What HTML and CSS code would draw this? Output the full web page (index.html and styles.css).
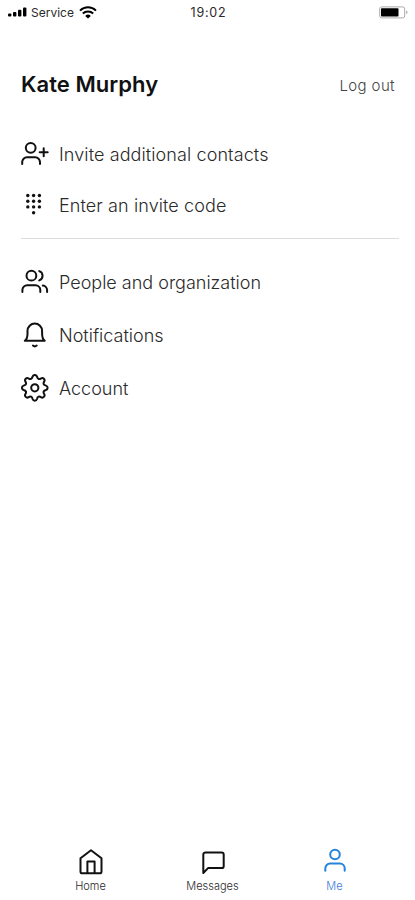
FILE: index.html
```html
<!DOCTYPE html>
<html lang="en">
<head>
  <meta charset="UTF-8" />
  <meta name="viewport" content="width=device-width, initial-scale=1.0"/>
  <title>Me</title>
  <link rel="stylesheet" href="styles.css">
</head>
<body>
  <div class="screen">
    <div class="status-bar">
      <div class="status-left">
        <svg class="signal" width="20" height="10" viewBox="0 0 20 10">
          <rect x="0" y="6.5" width="3.4" height="3" rx="1"/>
          <rect x="5" y="5" width="3.4" height="4.5" rx="1"/>
          <rect x="10" y="2.8" width="3.4" height="6.7" rx="1"/>
          <rect x="15" y="0.5" width="3.4" height="9" rx="1"/>
        </svg>
        <span class="carrier">Service</span>
        <svg class="wifi" width="18" height="13" viewBox="0 0 18 13">
          <path d="M1 4.6a11.5 11.5 0 0 1 16 0M3.8 7.5a7.6 7.6 0 0 1 10.4 0" fill="none" stroke="#000" stroke-width="2"/>
          <path d="M9 12.6L6.2 9.9a4 4 0 0 1 5.6 0z"/>
        </svg>
      </div>
      <span class="time">19:02</span>
      <svg class="battery" width="30" height="13" viewBox="0 0 30 13">
        <rect x="0.7" y="0.9" width="25" height="11" rx="2" fill="none" stroke="#aaa"/>
        <rect x="2" y="2.3" width="17.5" height="8.2" rx="0.8"/>
        <path d="M27.3 4.6c1.6.6 1.6 3 0 3.6z" fill="#999"/>
      </svg>
    </div>

    <div class="header">
      <h1>Kate Murphy</h1>
      <a class="logout">Log out</a>
    </div>

    <div class="menu invites">
      <div class="menu-item">
        <svg class="icon" viewBox="0 0 28 28">
          <circle cx="9.7" cy="7.8" r="4.9"/>
          <path d="M1.2 24v-1.9a4.8 4.8 0 0 1 4.8-4.8h8.2a4.8 4.8 0 0 1 4.8 4.8V24M22.7 8.3v8M18.7 12.3h8"/>
        </svg>
        <span>Invite additional contacts</span>
      </div>
      <div class="menu-item">
        <svg class="icon dots" viewBox="0 0 28 28">
          <circle cx="6.8" cy="4.5" r="1.7"/>
          <circle cx="12.6" cy="4.5" r="1.7"/>
          <circle cx="18.4" cy="4.5" r="1.7"/>
          <circle cx="6.8" cy="10.3" r="1.7"/>
          <circle cx="12.6" cy="10.3" r="1.7"/>
          <circle cx="18.4" cy="10.3" r="1.7"/>
          <circle cx="6.8" cy="15.9" r="1.7"/>
          <circle cx="12.6" cy="15.9" r="1.7"/>
          <circle cx="18.4" cy="15.9" r="1.7"/>
          <circle cx="12.6" cy="21.7" r="1.7"/>
        </svg>
        <span>Enter an invite code</span>
      </div>
    </div>

    <div class="menu settings">
      <div class="menu-item">
        <svg class="icon" viewBox="0 0 28 28">
          <circle cx="10.4" cy="7.7" r="4.9"/>
          <path d="M1.4 24v-2a4.8 4.8 0 0 1 4.8-4.8h8.3a4.8 4.8 0 0 1 4.8 4.8v2M18.2 3.1a4.9 4.9 0 0 1 0 9.3M21.8 17.6a4.8 4.8 0 0 1 4.3 4.8V24"/>
        </svg>
        <span>People and organization</span>
      </div>
      <div class="menu-item">
        <svg class="icon" viewBox="0 0 28 28">
          <path d="M3.8 19.7c2-1.4 2.7-3.4 2.7-7V9.9a7.3 7.3 0 0 1 14.6 0v2.8c0 3.6.7 5.6 2.7 7zM11.9 24.6a3 3 0 0 0 3.8 0"/>
        </svg>
        <span>Notifications</span>
      </div>
      <div class="menu-item">
        <svg class="icon" viewBox="0 0 28 28">
          <g transform="translate(13.8 13.8)">
            <circle r="3.6"/>
            <path d="M11.2-2.2A2.3 2.3 0 0 1 11.2 2.2Q7.4 3.1 9.5 6.4A2.3 2.3 0 0 1 6.4 9.5Q3.1 7.4 2.2 11.2A2.3 2.3 0 0 1-2.2 11.2Q-3.1 7.4-6.4 9.5A2.3 2.3 0 0 1-9.5 6.4Q-7.4 3.1-11.2 2.2A2.3 2.3 0 0 1-11.2-2.2Q-7.4-3.1-9.5-6.4A2.3 2.3 0 0 1-6.4-9.5Q-3.1-7.4-2.2-11.2A2.3 2.3 0 0 1 2.2-11.2Q3.1-7.4 6.4-9.5A2.3 2.3 0 0 1 9.5-6.4Q7.4-3.1 11.2-2.2z"/>
          </g>
        </svg>
        <span>Account</span>
      </div>
    </div>

    <div class="tab-bar">
      <div class="tab">
        <svg class="tab-icon" viewBox="0 0 28 28">
          <path d="M3.5 10.2L14 2.3l10.5 7.9v13.2a1.9 1.9 0 0 1-1.9 1.9H5.4a1.9 1.9 0 0 1-1.9-1.9zM10.4 25.3V13.5h7.2v11.8"/>
        </svg>
        <span>Home</span>
      </div>
      <div class="tab">
        <svg class="tab-icon" viewBox="0 0 28 28">
          <path d="M4.3 25V6.6a2.2 2.2 0 0 1 2.2-2.2h16a2.2 2.2 0 0 1 2.2 2.2v11.3a2.2 2.2 0 0 1-2.2 2.2H9z"/>
        </svg>
        <span>Messages</span>
      </div>
      <div class="tab active">
        <svg class="tab-icon" viewBox="0 0 28 28">
          <circle cx="14" cy="6.5" r="4.8"/>
          <path d="M4.3 22.7v-2.3a4.8 4.8 0 0 1 4.8-4.8h9.8a4.8 4.8 0 0 1 4.8 4.8v2.3"/>
        </svg>
        <span>Me</span>
      </div>
    </div>
  </div>
</body>
</html>
```
FILE: styles.css
```css
body {
  margin: 0;
  font-family: Inter, "Liberation Sans", sans-serif;
  background-color: #fff;
  color: #2a2a2a;
}
.screen {
  display: flex;
  flex-direction: column;
  height: 900px;
  overflow: hidden;
}
.status-bar {
  display: grid;
  grid-template-columns: 1fr auto 1fr;
  align-items: center;
  height: 24px;
  padding: 0 6px 0 8px;
}
.status-left {
  display: flex;
  align-items: center;
}
.carrier {
  font-size: 12px;
  margin: 0 5px 0 3px;
}
.time {
  font-size: 12.5px;
  letter-spacing: 0.8px;
}
.battery {
  justify-self: end;
}
.header {
  display: flex;
  justify-content: space-between;
  align-items: center;
  height: 30px;
  margin: 46px 20px 0 21px;
}
h1 {
  margin: 0;
  padding-bottom: 2px;
  font-size: 22px;
  font-weight: 600;
  line-height: 28px;
  letter-spacing: 0.05px;
  color: #111;
}
.logout {
  font-size: 15px;
  font-weight: 300;
  letter-spacing: 0.4px;
  color: #444;
}
.menu {
  display: flex;
  flex-direction: column;
  margin: 0 16px 0 21px;
}
.invites {
  gap: 23px;
  padding: 40px 0 19px;
  border-bottom: 1px solid #ddd;
}
.settings {
  gap: 25px;
  padding-top: 29px;
}
.menu-item {
  display: flex;
  align-items: center;
  gap: 10px;
  height: 28px;
  font-size: 18px;
  font-weight: 300;
}
.invites .menu-item {
  letter-spacing: 0.1px;
}
.icon,
.tab-icon {
  width: 28px;
  height: 28px;
  fill: none;
  stroke: #111;
  stroke-width: 2;
  stroke-linecap: round;
  stroke-linejoin: round;
}
.dots {
  fill: #111;
  stroke: none;
}
.tab-bar {
  display: grid;
  grid-template-columns: repeat(3, 122px);
  justify-content: center;
  margin: auto 0 6px 10px;
}
.tab {
  display: flex;
  flex-direction: column;
  align-items: center;
  gap: 3px;
  font-size: 11px;
  font-weight: 300;
  line-height: 15px;
}
.active {
  color: #3b78d8;
}
.active .tab-icon {
  stroke: #2583dc;
}
```
